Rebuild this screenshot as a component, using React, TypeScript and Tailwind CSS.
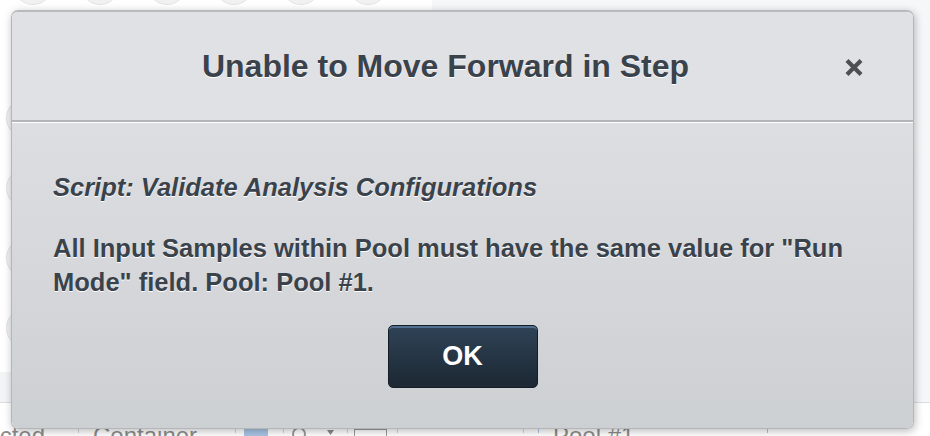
import React from 'react';

const font = "font-['Liberation_Sans',Arial,Helvetica,sans-serif]";

function Circle() {
  return <div className="w-[40px] h-[40px] shrink-0 rounded-full bg-[#f1f1f2] border border-[#e4e4e6]" />;
}

function Divider({ blue }: { blue?: boolean }) {
  return <div className={`w-px h-[30px] shrink-0 ${blue ? 'bg-[#a9c4e4]' : 'bg-[#d6d6d6]'}`} />;
}

function Backdrop() {
  return (
    <div className="flex flex-col w-[930px] h-[436px]">
      {/* top strip with step circles */}
      <div className="flex h-[10px] overflow-hidden">
        <div className="flex w-[432px] bg-white pl-[13px] gap-[27px]">
          {[0, 1, 2, 3, 4, 5].map((i) => (
            <div key={i} className="-mt-[35px]">
              <Circle />
            </div>
          ))}
        </div>
        <div className="flex-1 bg-[#f5f7f9]" />
      </div>

      {/* middle area */}
      <div className="flex h-[392px]">
        <div className="flex flex-col w-[460px] bg-white">
          <div className="flex flex-col h-[362px] pl-[6px] pt-[88px] gap-[30px]">
            {[0, 1, 2, 3].map((i) => (
              <Circle key={i} />
            ))}
          </div>
          <div className="flex-1 bg-[#f3f4f6]" />
        </div>
        <div className="flex-1 bg-[#f5f7f9]" />
      </div>

      {/* bottom toolbar row */}
      <div className="flex items-start h-[34px] border-t border-[#dcdde0] bg-white text-[24px] text-[#8c8c8c] leading-none whitespace-nowrap">
        <div className="flex justify-end w-[45px] pt-[21px]">
          <span>Selected</span>
        </div>
        <div className="w-[33px]" />
        <Divider />
        <div className="w-[14px]" />
        <span className="w-[142px] pt-[21px]">Container</span>
        <Divider />
        <div className="w-[8px]" />
        <div className="w-[24px] h-[14px] mt-[25px] bg-[#a9c4e4]" />
        <div className="w-[15px]" />
        <Divider />
        <div className="w-[6px]" />
        <svg className="mt-[22px]" width="28" height="14" viewBox="0 0 28 14">
          <circle cx="9" cy="9" r="6" fill="none" stroke="#9a9a9a" strokeWidth="2" />
        </svg>
        <div className="w-[9px]" />
        <svg className="mt-[27px]" width="7" height="5" viewBox="0 0 7 5">
          <path d="M0 0 L7 0 L3.5 5 Z" fill="#8a8a8a" />
        </svg>
        <div className="w-[13px]" />
        <Divider />
        <div className="w-[6px]" />
        <div className="w-[33px] h-[10px] mt-[25px] border-t-2 border-x border-[#9a9a9a]" />
        <div className="w-[10px]" />
        <Divider />
        <div className="w-[125px]" />
        <Divider />
        <div className="w-[14px]" />
        <Divider blue />
        <div className="w-[14px]" />
        <span className="w-[214px] pt-[21px]">Pool #1</span>
        <Divider blue />
      </div>
    </div>
  );
}

export default function App() {
  return (
    <div className={`relative w-[930px] h-[436px] overflow-hidden ${font}`}>
      <Backdrop />

      {/* modal dialog */}
      <div className="absolute left-[11px] top-[10px] w-[903px] h-[419px] flex flex-col rounded-[7px] border border-[#b5b6b9] border-t-2 border-t-[#b9babd] overflow-hidden shadow-[1px_2px_8px_rgba(0,0,0,0.28)]">
        <div className="relative flex items-center justify-center h-[110px] shrink-0 bg-[#e0e1e4] pr-[34px] border-b-2 border-[#b4b5b8]">
          <h2 className="text-[32px] font-bold text-[#3a424b] [text-shadow:0_1px_0_#ffffff]">
            Unable to Move Forward in Step
          </h2>
          <button className="absolute right-[49px] top-[45px] w-[20px] h-[20px] flex items-center justify-center">
            <svg width="20" height="19" viewBox="0 0 20 19">
              <path d="M3 2.5 L17 16.5 M17 2.5 L3 16.5" stroke="#4d4f52" strokeWidth="4.2" strokeLinecap="butt" />
            </svg>
          </button>
        </div>

        <div className="flex-1 flex flex-col border-t border-white bg-gradient-to-b from-[#dddee1] to-[#cdd0d3] pl-[41px] pr-[40px] pt-[47px]">
          <p className="text-[25.5px] leading-[34px] font-bold italic text-[#3a424b] [text-shadow:0_1px_0_#ffffff]">
            Script: Validate Analysis Configurations
          </p>
          <p className="mt-[27px] text-[25.5px] leading-[34px] font-bold text-[#3a424b] [text-shadow:0_1px_0_#ffffff]">
            All Input Samples within Pool must have the same value for "Run Mode" field. Pool: Pool #1.
          </p>
          <div className="mt-[26px] flex justify-center pr-[1px]">
            <button className="w-[150px] h-[63px] rounded-[5px] border border-[#151d26] bg-gradient-to-b from-[#2f4357] to-[#1c2833] shadow-[inset_0_2px_0_#51708f] text-white text-[27px] font-bold">
              OK
            </button>
          </div>
        </div>
      </div>
    </div>
  );
}
